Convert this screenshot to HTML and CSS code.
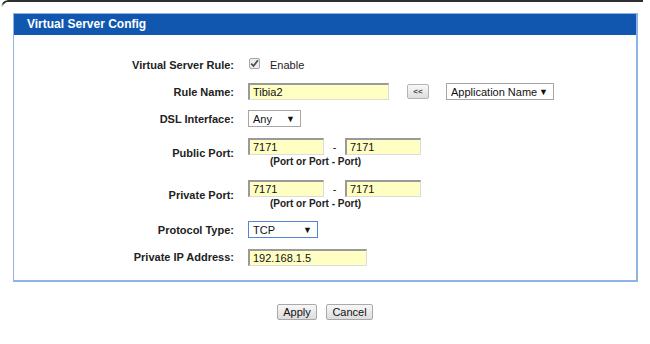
FILE: index.html
```html
<!DOCTYPE html>
<html lang="en">
<head>
    <meta charset="UTF-8">
    <title>Virtual Server Config</title>
    <link rel="stylesheet" href="styles.css">
</head>
<body>
    <div class="frame"></div>

    <div class="panel">
        <div class="panel-title">Virtual Server Config</div>
        <div class="panel-body">
            <div class="row row-1">
                <span class="label">Virtual Server Rule:</span>
                <div class="field">
                    <span class="check">
                        <svg width="9" height="9" viewBox="0 0 9 9"><path d="M1.2 4.6 L3.5 7 L7.9 1.2" fill="none" stroke="#4a4a4a" stroke-width="1.7"/></svg>
                    </span>
                    <span class="check-text">Enable</span>
                </div>
            </div>
            <div class="row row-2">
                <span class="label">Rule Name:</span>
                <div class="field">
                    <span class="input w-name">Tibia2</span>
                    <span class="btn-small">&lt;&lt;</span>
                    <span class="select w-app">Application Name<i>▼</i></span>
                </div>
            </div>
            <div class="row row-3">
                <span class="label">DSL Interface:</span>
                <div class="field">
                    <span class="select w-dsl">Any<i>▼</i></span>
                </div>
            </div>
            <div class="row row-port">
                <span class="label">Public Port:</span>
                <div class="port">
                    <div class="field">
                        <span class="input w-port">7171</span>
                        <span class="dash">-</span>
                        <span class="input w-port">7171</span>
                    </div>
                    <div class="hint">(Port or Port - Port)</div>
                </div>
            </div>
            <div class="row row-port">
                <span class="label">Private Port:</span>
                <div class="port">
                    <div class="field">
                        <span class="input w-port">7171</span>
                        <span class="dash">-</span>
                        <span class="input w-port">7171</span>
                    </div>
                    <div class="hint">(Port or Port - Port)</div>
                </div>
            </div>
            <div class="row row-6">
                <span class="label">Protocol Type:</span>
                <div class="field">
                    <span class="select w-proto focus">TCP<i>▼</i></span>
                </div>
            </div>
            <div class="row row-7">
                <span class="label">Private IP Address:</span>
                <div class="field">
                    <span class="input w-ip">192.168.1.5</span>
                </div>
            </div>
        </div>
    </div>

    <div class="actions">
        <button class="btn btn-apply">Apply</button>
        <button class="btn btn-cancel">Cancel</button>
    </div>
</body>
</html>
```

FILE: styles.css
```css
* {
    margin: 0;
    padding: 0;
    box-sizing: border-box;
}
body {
    font-family: "Liberation Sans", Arial, sans-serif;
    font-size: 11px;
    color: #111;
    background: #fff;
    width: 650px;
    height: 344px;
    overflow: hidden;
}
.frame {
    height: 7px;
    margin: 0 7px 0 1px;
    border-top: 2px solid #2e2e2e;
    border-left: 2px solid #2e2e2e;
    border-top-left-radius: 7px;
    -webkit-mask-image: linear-gradient(180deg, #000 0%, #000 40%, transparent 100%);
}
.panel {
    margin: 6px 0 0 13px;
    width: 625px;
    border: 1px solid #8fb3e3;
    border-right-width: 2px;
    border-bottom-width: 2px;
}
.panel-title {
    height: 21px;
    line-height: 21px;
    background: #1157b0;
    color: #fff;
    font-weight: bold;
    font-size: 12px;
    padding-left: 13px;
}
.panel-body {
    padding: 17px 0 9px 0;
}
.row {
    display: grid;
    grid-template-columns: 220px 1fr;
    column-gap: 14px;
    align-items: center;
    height: 27px;
}
.row-1 { height: 26px; }
.row-port { height: 42px; }
.row-7 { height: 28px; }
.label {
    text-align: right;
    font-weight: bold;
    color: #222;
}
.field {
    display: flex;
    align-items: center;
    white-space: nowrap;
}
.check {
    width: 11px;
    height: 11px;
    margin-left: 1px;
    border: 1px solid #a8a8a8;
    border-radius: 2px;
    background: #ececec;
    display: flex;
    align-items: center;
    justify-content: center;
    position: relative;
    top: -2px;
}
.check-text {
    margin-left: 10px;
    color: #222;
}
.input {
    height: 17px;
    line-height: 14px;
    padding-left: 3px;
    background: #ffffc4;
    border: 1px solid #dcdcdc;
    border-top: 2px solid #9a9a9a;
    border-left: 2px solid #9a9a9a;
    color: #111;
}
.w-name { width: 141px; }
.w-port { width: 76px; }
.w-ip { width: 119px; }
.dash {
    width: 21px;
    text-align: center;
}
.select {
    height: 17px;
    display: flex;
    align-items: center;
    justify-content: space-between;
    padding: 0 5px 0 4px;
    border: 1px solid #a6a6a6;
    background: #fff;
    color: #111;
}
.select i {
    font-style: normal;
    font-size: 9px;
    color: #111;
}
.select.focus {
    border-color: #4f86d6;
}
.w-app { width: 108px; margin-left: 17px; }
.w-dsl { width: 53px; }
.w-proto { width: 70px; }
.btn-small {
    width: 22px;
    height: 15px;
    margin-left: 18px;
    border: 1px solid #b4b4b4;
    border-radius: 2px;
    background: linear-gradient(#f8f8f8, #dedede);
    font-size: 8px;
    font-weight: bold;
    color: #444;
    display: flex;
    align-items: center;
    justify-content: center;
}
.hint {
    font-size: 10px;
    font-weight: bold;
    color: #222;
    padding-left: 22px;
    margin-top: 1px;
    line-height: 12px;
}
.actions {
    display: flex;
    justify-content: center;
    gap: 9px;
    margin-top: 22px;
}
.btn {
    height: 16px;
    font-family: "Liberation Sans", Arial, sans-serif;
    font-size: 11px;
    color: #111;
    border: 1px solid #a9a9a9;
    border-radius: 2px;
    background: linear-gradient(#f7f7f7, #dddddd);
}
.btn-apply { width: 40px; }
.btn-cancel { width: 47px; }
```
